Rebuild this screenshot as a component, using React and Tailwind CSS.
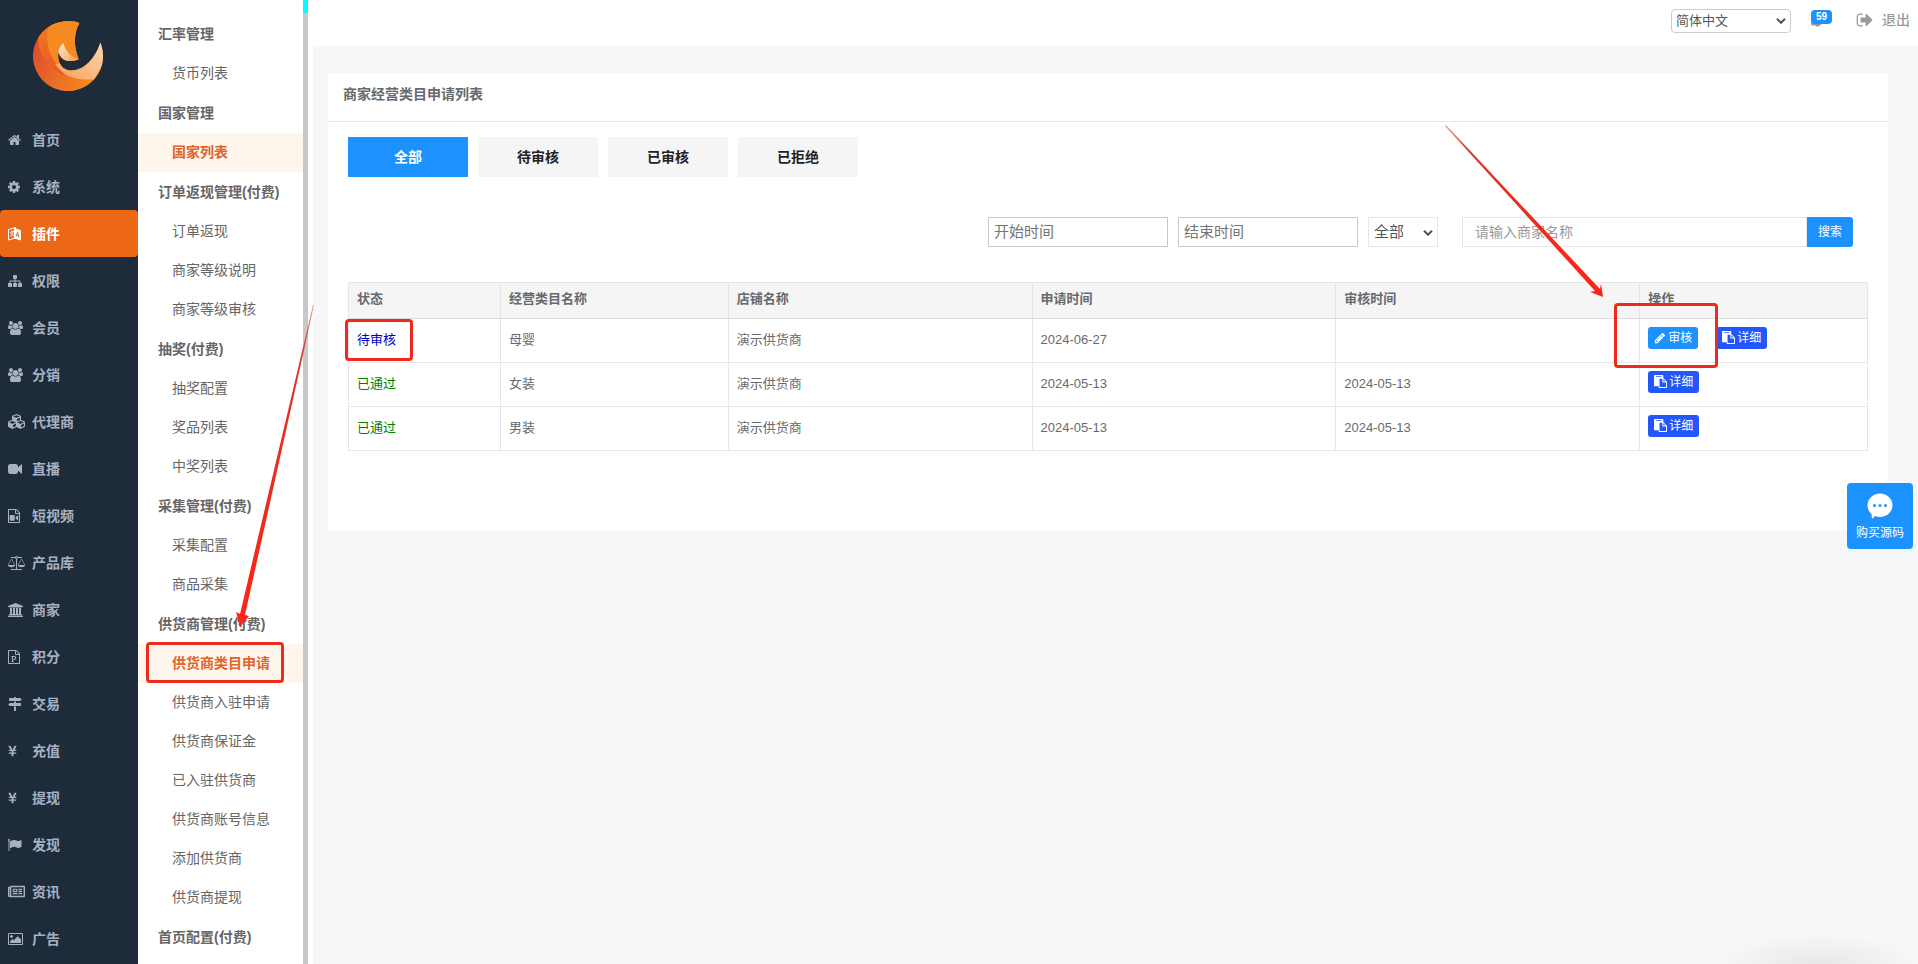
import React, { useState } from 'react';
import { FaCubes, FaYenSign, FaRegNewspaper } from 'react-icons/fa';

const ICONS = {
  home: {
    box: '64 0 1792 1792',
    d: 'M1472 992v480q0 26-19 45t-45 19h-384v-384h-256v384h-384q-26 0-45-19t-19-45v-480q0-1 .5-3t.5-3l575-474 575 474q1 2 1 6zm223-69l-62 74q-8 9-21 11h-3q-13 0-21-7l-692-577-692 577q-12 8-24 7-13-2-21-11l-62-74q-8-10-7-23.5t11-21.5l719-599q32-26 76-26t76 26l244 204v-195q0-14 9-23t23-9h192q14 0 23 9t9 23v408l219 182q10 8 11 21.5t-7 23.5z',
  },
  cog: {
    box: '128 0 1792 1792',
    d: 'M1152 896q0-106-75-181t-181-75-181 75-75 181 75 181 181 75 181-75 75-181zm512-109v222q0 12-8 23t-20 13l-185 28q-19 54-39 91 35 50 107 138 10 12 10 25t-9 23q-27 37-99 108t-94 71q-12 0-26-9l-138-108q-44 23-91 38-16 136-29 186-7 28-36 28h-222q-14 0-24.5-8.5t-11.5-21.5l-28-184q-49-16-90-37l-141 107q-10 9-25 9-14 0-25-11-126-114-165-168-7-10-7-23 0-12 8-23 15-21 51-66.5t54-70.5q-27-50-41-99l-183-27q-13-2-21-12.5t-8-23.5v-222q0-12 8-23t19-13l186-28q14-46 39-92-40-57-107-138-10-12-10-24 0-10 9-23 26-36 98.5-107.5t94.5-71.5q13 0 26 10l138 107q44-23 91-38 16-136 29-186 7-28 36-28h222q14 0 24.5 8.5t11.5 21.5l28 184q49 16 90 37l142-107q9-9 24-9 13 0 25 10 129 119 165 170 7 8 7 22 0 12-8 23-15 21-51 66.5t-54 70.5q26 50 41 98l183 28q13 2 21 12.5t8 23.5z',
  },
  sitemap: {
    box: '0 0 1792 1792',
    d: 'M1792 1248v320q0 40-28 68t-68 28h-320q-40 0-68-28t-28-68v-320q0-40 28-68t68-28h96v-192h-512v192h96q40 0 68 28t28 68v320q0 40-28 68t-68 28h-320q-40 0-68-28t-28-68v-320q0-40 28-68t68-28h96v-192h-512v192h96q40 0 68 28t28 68v320q0 40-28 68t-68 28h-320q-40 0-68-28t-28-68v-320q0-40 28-68t68-28h96v-192q0-52 38-90t90-38h512v-192h-96q-40 0-68-28t-28-68v-320q0-40 28-68t68-28h320q40 0 68 28t28 68v320q0 40-28 68t-68 28h-96v192h512q52 0 90 38t38 90v192h96q40 0 68 28t28 68z',
  },
  group: {
    box: '-64 0 1920 1792',
    d: 'M529 896q-162 5-265 128h-134q-82 0-138-40.5t-56-118.5q0-353 124-353 6 0 43.5 21t97.5 42.5 119 21.5q67 0 133-23-5 37-5 66 0 139 81 256zm1071 637q0 120-73 189.5t-194 69.5h-874q-121 0-194-69.5t-73-189.5q0-53 3.5-103.5t14-109 26.5-108.5 43-97.5 62-81 85.5-53.5 111.5-20q10 0 43 21.5t73 48 107 48 135 21.5 135-21.5 107-48 73-48 43-21.5q61 0 111.5 20t85.5 53.5 62 81 43 97.5 26.5 108.5 14 109 3.5 103.5zm-1024-1277q0 106-75 181t-181 75-181-75-75-181 75-181 181-75 181 75 75 181zm704 384q0 159-112.5 271.5t-271.5 112.5-271.5-112.5-112.5-271.5 112.5-271.5 271.5-112.5 271.5 112.5 112.5 271.5zm576 225q0 78-56 118.5t-138 40.5h-134q-103-123-265-128 81-117 81-256 0-29-5-66 66 23 133 23 59 0 119-21.5t97.5-42.5 43.5-21q124 0 124 353zm-128-609q0 106-75 181t-181 75-181-75-75-181 75-181 181-75 181 75 75 181z',
  },
  video: {
    box: '0 0 1792 1792',
    d: 'M1792 352v1088q0 42-39 59-13 5-25 5-27 0-45-19l-403-403v166q0 119-84.5 203.5t-203.5 84.5h-704q-119 0-203.5-84.5t-84.5-203.5v-704q0-119 84.5-203.5t203.5-84.5h704q119 0 203.5 84.5t84.5 203.5v165l403-402q18-19 45-19 12 0 25 5 39 17 39 59z',
  },
  fileVideo: {
    box: '128 0 1792 1792',
    d: 'M1596 380q28 28 48 76t20 88v1152q0 40-28 68t-68 28h-1344q-40 0-68-28t-28-68v-1600q0-40 28-68t68-28h896q40 0 88 20t76 48zm-444-244v376h376q-10-29-22-41l-313-313q-12-12-41-22zm384 1528v-1024h-416q-40 0-68-28t-28-68v-416h-768v1536h1280zM860 768q52 0 90 38t38 90v480q0 52-38 90t-90 38h-400q-52 0-90-38t-38-90v-480q0-52 38-90t90-38h400zm552 30q20 8 20 30v616q0 22-20 30-8 2-12 2-14 0-23-9l-285-286v-90l285-286q9-9 23-9 4 0 12 2z',
  },
  balance: {
    box: '0 0 2176 1792',
    d: 'M1728 448l-384 704h768zm-1280 0l-384 704h768zm821-192q-14 40-45.500 71.500t-71.500 45.500v1291h608q14 0 23 9t9 23v64q0 14-9 23t-23 9h-1344q-14 0-23-9t-9-23v-64q0-14 9-23t23-9h608v-1291q-40-14-71.500-45.500t-45.500-71.500h-491q-14 0-23-9t-9-23v-64q0-14 9-23t23-9h491q21-57 70-92.500t111-35.500 111 35.500 70 92.500h491q14 0 23 9t9 23v64q0 14-9 23t-23 9h-491zm-181 16q33 0 56.500-23.500t23.500-56.500-23.500-56.500-56.500-23.500-56.500 23.500-23.500 56.500 23.500 56.500 56.500 23.500zm1088 880q0 73-46.500 131t-117.500 91-144.500 49.500-139.500 16.500-139.500-16.500-144.500-49.500-117.500-91-46.500-131q0-11 35-81t92-174.500 107-195.500 102-184 56-100q18-33 56-33t56 33q4 7 56 100t102 184 107 195.500 92 174.500 35 81zm-1280 0q0 73-46.500 131t-117.500 91-144.500 49.500-139.500 16.500-139.500-16.500-144.500-49.500-117.500-91-46.500-131q0-11 35-81t92-174.500 107-195.500 102-184 56-100q18-33 56-33t56 33q4 7 56 100t102 184 107 195.500 92 174.500 35 81z',
  },
  bank: {
    box: '-128 0 1920 1792',
    d: 'M832 0l960 384v128h-128q0 26-20.5 45t-48.5 19h-1526q-28 0-48.500-19t-20.500-45h-128v-128zm-704 640h256v768h128v-768h256v768h128v-768h256v768h128v-768h256v768h59q28 0 48.500 19t20.500 45v64h-1664v-64q0-26 20.500-45t48.500-19h59v-768zm1595 960q28 0 48.500 19t20.500 45v128h-1920v-128q0-26 20.500-45t48.500-19h1782z',
  },
  filePoint: {
    box: '128 0 1792 1792',
    d: 'M1596 380q28 28 48 76t20 88v1152q0 40-28 68t-68 28h-1344q-40 0-68-28t-28-68v-1600q0-40 28-68t68-28h896q40 0 88 20t76 48zm-444-244v376h376q-10-29-22-41l-313-313q-12-12-41-22zm384 1528v-1024h-416q-40 0-68-28t-28-68v-416h-768v1536h1280zm-992-234v106h327v-106h-93v-167h137q76 0 118-15 67-23 106.500-87t39.500-146q0-81-37-141t-100-87q-48-19-130-19h-368v107h92v555h-92zm353-280h-119v-268h120q52 0 83 18 56 33 56 115 0 89-62 120-31 15-78 15z',
  },
  signs: {
    box: '0 0 1792 1792',
    d: 'M1745 297q10 10 10 23t-10 23l-141 141q-28 28-68 28h-1344q-26 0-45-19t-19-45v-256q0-26 19-45t45-19h576v-64q0-26 19-45t45-19h128q26 0 45 19t19 45v64h512q40 0 68 28zm-977 919h256v512q0 26-19 45t-45 19h-128q-26 0-45-19t-19-45v-512zm832-448q26 0 45 19t19 45v256q0 26-19 45t-45 19h-1344q-40 0-68-28l-141-141q-10-10-10-23t10-23l141-141q28-28 68-28h512v-192h256v192h576z',
  },
  flag: {
    box: '64 0 1792 1792',
    d: 'M320 256q0 72-64 110v1266q0 13-9.500 22.500t-22.500 9.500h-64q-13 0-22.500-9.500t-9.500-22.500v-1266q-64-38-64-110 0-53 37.500-90.500t90.500-37.500 90.500 37.500 37.500 90.500zm1472 64v763q0 25-12.500 38.500t-39.500 27.500q-215 116-369 116-61 0-123.500-22t-108.500-48-115.500-48-142.500-22q-192 0-464 146-17 9-33 9-26 0-45-19t-19-45v-742q0-32 31-55 21-14 79-43 236-120 421-120 107 0 200 29t219 88q38 19 88 19 54 0 117.500-21t110-47 88-47 54.500-21q26 0 45 19t19 45z',
  },
  image: {
    box: '-64 0 1920 1792',
    d: 'M576 576q0 80-56 136t-136 56-136-56-56-136 56-136 136-56 136 56 56 136zm1024 384v448h-1408v-192l320-320 160 160 512-512zm96-704h-1600q-13 0-22.500 9.500t-9.500 22.500v1216q0 13 9.500 22.500t22.500 9.500h1600q13 0 22.500-9.500t9.500-22.500v-1216q0-13-9.500-22.500t-22.500-9.500zm160 32v1216q0 66-47 113t-113 47h-1600q-66 0-113-47t-47-113v-1216q0-66 47-113t113-47h1600q66 0 113 47t47 113z',
  },
  pencil: {
    box: '0 0 1792 1792',
    d: 'M491 1536l91-91-235-235-91 91v107h128v128h107zm523-928q0-22-22-22-10 0-17 7l-542 542q-7 7-7 17 0 22 22 22 10 0 17-7l542-542q7-7 7-17zm-54-192l416 416-832 832h-416v-416zm683 96q0 53-37 90l-166 166-416-416 166-165q36-38 90-38 53 0 91 38l235 234q37 39 37 91z',
  },
  paste: {
    box: '0 0 1792 1792',
    d: 'M768 1664h896v-640h-416q-40 0-68-28t-28-68v-416h-384v1152zm256-1440v-64q0-13-9.500-22.500t-22.500-9.500h-704q-13 0-22.500 9.500t-9.500 22.500v64q0 13 9.500 22.500t22.500 9.500h704q13 0 22.500-9.500t9.500-22.500zm256 672h299l-299-299v299zm512 128v672q0 40-28 68t-68 28h-960q-40 0-68-28t-28-68v-160h-544q-40 0-68-28t-28-68v-1344q0-40 28-68t68-28h1088q40 0 68 28t28 68v328q21 13 36 28l408 408q28 28 48 76t20 88z',
  },
  signOut: {
    box: '0 0 1792 1792',
    d: 'M704 1440q0 4 1 20t.5 26.500-3 23.500-10 19.500-20.500 6.500h-320q-119 0-203.500-84.500t-84.500-203.500v-704q0-119 84.500-203.500t203.500-84.500h320q13 0 22.500 9.500t9.500 22.500q0 4 1 20t.5 26.500-3 23.500-10 19.500-20.500 6.500h-320q-66 0-113 47t-47 113v704q0 66 47 113t113 47h312l11.500 1 11.500 3 8 5.500 7 9 2 13.500zm928-544q0 26-19 45l-544 544q-19 19-45 19t-45-19-19-45v-288h-448q-26 0-45-19t-19-45v-384q0-26 19-45t45-19h448v-288q0-26 19-45t45-19 45 19l544 544q19 19 19 45z',
  },
};

const Icon = ({ name, className }) => (
  <svg viewBox={ICONS[name].box} className={className} fill="currentColor" aria-hidden="true">
    <path d={ICONS[name].d} />
  </svg>
);

// Two overlapping pages, the front one filled
const LanguageIcon = () => (
  <svg viewBox="0 0 14 14" className="h-3.5 w-3.5" fill="none" stroke="currentColor" aria-hidden="true">
    <path d="M.5 2.500 7.500.5v10.500l-7 2z" />
    <path d="M2 5.500l4-1.200M4 3.500v1.300M5.200 5c-.5 2-1.500 3.500-3.200 4.500M2.800 6c.8 1.500 1.800 2.300 3.200 2.800" strokeWidth=".8" />
    <path d="M6.500 1.500l6 2v9.500l-6-2z" fill="currentColor" />
    <path d="M8 9.500l1.500-4.500 1.500 5.500M8.500 8.300l2 .6" stroke="#ec6816" strokeWidth=".9" />
  </svg>
);

const Logo = () => (
  <svg viewBox="0 0 70 70" className="h-[70px] w-[70px]" aria-hidden="true">
    <defs>
      <linearGradient id="logoBase" x1="0" y1=".4" x2="1" y2=".9">
        <stop offset="0" stopColor="#df4d2b" />
        <stop offset=".55" stopColor="#ee7524" />
        <stop offset="1" stopColor="#f8921d" />
      </linearGradient>
      <linearGradient id="logoMid" x1="0" y1="0" x2=".6" y2="1">
        <stop offset="0" stopColor="#f47a1e" />
        <stop offset="1" stopColor="#e4562a" />
      </linearGradient>
      <linearGradient id="logoPale" x1="0" y1="1" x2="1" y2="0">
        <stop offset="0" stopColor="#f5a052" />
        <stop offset="1" stopColor="#fbdcbd" />
      </linearGradient>
      <linearGradient id="logoInner" x1="0" y1="0" x2="1" y2="1">
        <stop offset="0" stopColor="#fde9d6" />
        <stop offset="1" stopColor="#f4a05a" />
      </linearGradient>
      <clipPath id="logoClip">
        <path d="M46.300 2A35 35 0 1 0 67.300 21.600C64 33 54 49.500 38 49.500C29 49.500 24 42 25.300 31C27 36 31 40 36 40C40 40 43 39.500 45.700 38.300C40.500 25 40.500 13 46.300 2z" />
      </clipPath>
    </defs>
    <g clipPath="url(#logoClip)">
      <rect width="70" height="70" fill="url(#logoBase)" />
      <path d="M5 16C5 35 18 48 30 54L45 38L50 0H10z" fill="url(#logoMid)" />
      <path d="M15 7C12 24 17 36 26 46L46 40L50 0H20z" fill="#f58a20" />
      <path d="M22 43C32 58 46 59 61 58.500L72 40V15L45 40z" fill="url(#logoPale)" />
    </g>
    <path d="M30.300 22C28 24.500 25.500 28 25.300 31C27 36 31 40 36 40C40 40 43 39.500 45.700 38.300C38 36 33 31 30.300 22z" fill="url(#logoInner)" />
  </svg>
);

const navItems = [
  { label: '首页', icon: <Icon name="home" className="h-3.5 w-3.5" /> },
  { label: '系统', icon: <Icon name="cog" className="h-3.5 w-3.5" /> },
  { label: '插件', icon: <LanguageIcon /> },
  { label: '权限', icon: <Icon name="sitemap" className="h-3.5 w-3.5" /> },
  { label: '会员', icon: <Icon name="group" className="h-3.5 w-[15px]" /> },
  { label: '分销', icon: <Icon name="group" className="h-3.5 w-[15px]" /> },
  { label: '代理商', icon: <FaCubes className="h-[17px] w-[17px]" /> },
  { label: '直播', icon: <Icon name="video" className="h-3.5 w-3.5" /> },
  { label: '短视频', icon: <Icon name="fileVideo" className="h-3.5 w-3.5" /> },
  { label: '产品库', icon: <Icon name="balance" className="h-3.5 w-[17px]" /> },
  { label: '商家', icon: <Icon name="bank" className="h-3.5 w-[15px]" /> },
  { label: '积分', icon: <Icon name="filePoint" className="h-3.5 w-3.5" /> },
  { label: '交易', icon: <Icon name="signs" className="h-3.5 w-3.5" /> },
  { label: '充值', icon: <FaYenSign className="h-3 w-[9px]" /> },
  { label: '提现', icon: <FaYenSign className="h-3 w-[9px]" /> },
  { label: '发现', icon: <Icon name="flag" className="h-3.5 w-3.5" /> },
  { label: '资讯', icon: <FaRegNewspaper className="h-[17px] w-[17px]" /> },
  { label: '广告', icon: <Icon name="image" className="h-3.5 w-[15px]" /> },
];

const menuGroups = [
  { title: '汇率管理', items: ['货币列表'] },
  { title: '国家管理', items: ['国家列表'] },
  { title: '订单返现管理(付费)', items: ['订单返现', '商家等级说明', '商家等级审核'] },
  { title: '抽奖(付费)', items: ['抽奖配置', '奖品列表', '中奖列表'] },
  { title: '采集管理(付费)', items: ['采集配置', '商品采集'] },
  {
    title: '供货商管理(付费)',
    items: ['供货商类目申请', '供货商入驻申请', '供货商保证金', '已入驻供货商', '供货商账号信息', '添加供货商', '供货商提现'],
  },
  { title: '首页配置(付费)', items: [] },
];

const activeMenus = ['国家列表', '供货商类目申请'];

const tabs = ['全部', '待审核', '已审核', '已拒绝'];

const columns = [
  { label: '状态', width: 'w-[10%]' },
  { label: '经营类目名称', width: 'w-[15%]' },
  { label: '店铺名称', width: 'w-[20%]' },
  { label: '申请时间', width: 'w-[20%]' },
  { label: '审核时间', width: 'w-[20%]' },
  { label: '操作', width: 'w-[15%]' },
];

const rows = [
  { id: 1, status: '待审核', category: '母婴', shop: '演示供货商', applied: '2024-06-27', audited: '' },
  { id: 2, status: '已通过', category: '女装', shop: '演示供货商', applied: '2024-05-13', audited: '2024-05-13' },
  { id: 3, status: '已通过', category: '男装', shop: '演示供货商', applied: '2024-05-13', audited: '2024-05-13' },
];

const Marker = ({ className }) => (
  <span className={`pointer-events-none absolute z-10 rounded border-[3px] border-[#ee2a1d] ${className}`} />
);

const Chevron = ({ className }) => (
  <svg viewBox="0 0 10 6" className={`pointer-events-none absolute h-1.5 w-2.5 ${className}`} fill="none" stroke="#555" strokeWidth="2" aria-hidden="true">
    <path d="M1 .8 5 4.800 9 .8" />
  </svg>
);

const Sidebar = () => (
  <aside className="w-[138px] shrink-0 bg-[#1e2b3a]">
    <div className="flex h-[116px] items-start pl-[33px] pt-[21px]">
      <Logo />
    </div>
    <nav>
      {navItems.map((item) => (
        <a
          key={item.label}
          href="#"
          className={`flex h-[47px] items-center pl-2 text-sm font-bold ${
            item.label === '插件' ? 'rounded-sm bg-[#ec6816] text-white' : 'text-[#a7b1c2]'
          }`}
        >
          <span className="flex w-6 shrink-0 items-center">{item.icon}</span>
          {item.label}
        </a>
      ))}
    </nav>
  </aside>
);

const SubMenu = () => (
  <div className="flex w-[170px] shrink-0 bg-white">
    <nav className="min-w-0 flex-1 pt-3.5">
      {menuGroups.map((group) => (
        <div key={group.title}>
          <h2 className="flex h-10 items-center pl-5 text-sm font-bold text-[#666]">{group.title}</h2>
          {group.items.map((item) => (
            <a
              key={item}
              href="#"
              className={`relative flex h-[39px] items-center pb-0.5 pl-[34px] text-sm ${
                activeMenus.includes(item) ? 'bg-[#fef5ec] font-bold text-[#e0652a]' : 'text-[#666]'
              }`}
            >
              {item}
              {item === '供货商类目申请' && <Marker className="-top-0.5 bottom-0 left-2 w-[138px]" />}
            </a>
          ))}
        </div>
      ))}
    </nav>
    <div className="w-[5px] bg-[#c8c8c8]">
      <div className="h-[13px] bg-[#00ffff]" />
    </div>
  </div>
);

const TopBar = () => (
  <header className="flex h-[46px] items-start justify-end bg-white pr-2 pt-2">
    <div className="relative mr-5">
      <select
        aria-label="语言"
        className="h-6 w-[120px] appearance-none rounded border border-[#ccc] bg-white pl-1 text-[13px] leading-5 text-[#555]"
      >
        <option>简体中文</option>
      </select>
      <Chevron className="right-[5px] top-2.5" />
    </div>
    <a href="#" aria-label="消息" className="relative mr-6 mt-0.5 block h-4 w-[21px]">
      <svg viewBox="0 0 21 17" className="h-[17px] w-[21px] text-[#999]" fill="currentColor" aria-hidden="true">
        <path d="M0 12v2a1.500 1.500 0 0 0 1.500 1.500H4.500L6.500 17 11 14z" />
      </svg>
      <span className="absolute left-0 top-0 flex h-3.5 w-[21px] items-center justify-center rounded-sm bg-[#1c92fe] text-[10px] font-bold leading-none text-white">
        59
      </span>
    </a>
    <a href="#" className="flex h-6 items-center text-sm text-[#999c9e]">
      <Icon name="signOut" className="mr-2 h-[18px] w-[18px]" />
      <span className="leading-5 font-medium">退出</span>
    </a>
  </header>
);

const DetailButton = () => (
  <button type="button" className="flex h-[22px] items-center gap-0.5 rounded-[3px] bg-[#2357fc] px-1.5 text-xs text-white">
    <Icon name="paste" className="h-[13px] w-[13px]" />
    详细
  </button>
);

const App = () => {
  const [activeTab, setActiveTab] = useState('全部');
  const [keyword, setKeyword] = useState('');

  return (
    <div className="relative flex h-screen overflow-hidden bg-[#f5f7f9] font-['Liberation_Sans','Noto_Sans_CJK_SC',sans-serif] text-[#666]">
      <Sidebar />
      <SubMenu />

      <div className="flex min-w-0 flex-1 flex-col bg-white">
        <TopBar />

        <main className="ml-[5px] flex-1 bg-[#f5f7f9] pl-[15px] pr-[30px] pt-[27px]">
          <section className="bg-white pb-20">
            {/* Title */}
            <div className="flex h-[49px] items-center border-b border-[#e7eaec] pb-1.5 pl-[15px]">
              <h1 className="text-sm font-bold text-[#676a6c]">商家经营类目申请列表</h1>
            </div>

            <div className="px-5 pt-[15px]">
              {/* Tabs */}
              <div className="flex gap-2.5">
                {tabs.map((tab) => (
                  <button
                    key={tab}
                    type="button"
                    onClick={() => setActiveTab(tab)}
                    className={`h-10 w-[120px] text-sm font-bold ${
                      activeTab === tab ? 'bg-[#1c92fe] text-white' : 'bg-[#f5f5f5] text-[#222]'
                    }`}
                  >
                    {tab}
                  </button>
                ))}
              </div>

              {/* Search */}
              <form className="mt-10 flex justify-end pr-[15px]" onSubmit={(e) => e.preventDefault()}>
                <input
                  type="text"
                  aria-label="开始时间"
                  placeholder="开始时间"
                  className="mr-2.5 h-[30px] w-[180px] border border-[#c8c8c8] px-[5px] pb-0.5 text-[15px] placeholder:text-[#757575]"
                />
                <input
                  type="text"
                  aria-label="结束时间"
                  placeholder="结束时间"
                  className="mr-2.5 h-[30px] w-[180px] border border-[#c8c8c8] px-[5px] pb-0.5 text-[15px] placeholder:text-[#757575]"
                />
                <div className="relative mr-6">
                  <select
                    aria-label="状态"
                    className="h-[30px] w-[70px] appearance-none border border-[#e5e6e7] bg-white pl-[5px] text-[15px] text-[#555]"
                  >
                    <option>全部</option>
                  </select>
                  <Chevron className="right-[5px] top-[13px]" />
                </div>
                <input
                  type="text"
                  aria-label="商家名称"
                  placeholder="请输入商家名称"
                  value={keyword}
                  onChange={(e) => setKeyword(e.target.value)}
                  className="h-[30px] w-[345px] border border-[#e5e6e7] px-3 text-sm placeholder:text-[#999]"
                />
                <button type="submit" className="h-[30px] w-[46px] rounded-r-[3px] bg-[#1c92fe] text-xs text-white">
                  搜索
                </button>
              </form>

              {/* Table */}
              <table className="mt-[35px] w-full table-fixed border-collapse text-[13px] text-[#676a6c]">
                <thead className="bg-[#f5f5f5]">
                  <tr className="h-9">
                    {columns.map((col) => (
                      <th
                        key={col.label}
                        className={`${col.width} border border-[#e5e5e5] border-b-[#ddd] px-2 pb-1 text-left font-bold leading-5`}
                      >
                        {col.label}
                      </th>
                    ))}
                  </tr>
                </thead>
                <tbody>
                  {rows.map((row) => (
                    <tr key={row.id} className="h-11">
                      <td
                        className={`relative border border-[#e7e7e7] px-2 pb-0.5 leading-5 ${
                          row.status === '待审核' ? 'text-[#0000cd]' : 'text-[#008000]'
                        }`}
                      >
                        {row.status}
                        {row.status === '待审核' && <Marker className="-left-1 top-0 h-[42px] w-[68px]" />}
                      </td>
                      <td className="border border-[#e7e7e7] px-2 pb-0.5 leading-5">{row.category}</td>
                      <td className="border border-[#e7e7e7] px-2 pb-0.5 leading-5">{row.shop}</td>
                      <td className="border border-[#e7e7e7] px-2 pb-0.5 leading-5">{row.applied}</td>
                      <td className="border border-[#e7e7e7] px-2 pb-0.5 leading-5">{row.audited}</td>
                      <td className="relative border border-[#e7e7e7] px-2 pb-1.5">
                        <div className="flex">
                          {row.status === '待审核' && (
                            <button
                              type="button"
                              className="mr-[18px] flex h-[22px] items-center gap-0.5 rounded-[3px] bg-[#1c92fe] px-1.5 text-xs text-white"
                            >
                              <Icon name="pencil" className="h-3 w-3" />
                              审核
                            </button>
                          )}
                          <DetailButton />
                        </div>
                        {row.status === '待审核' && <Marker className="-left-[26px] -top-4 h-[65px] w-[104px]" />}
                      </td>
                    </tr>
                  ))}
                </tbody>
              </table>
            </div>
          </section>
        </main>
      </div>

      {/* Buy button */}
      <button
        type="button"
        className="absolute right-[5px] top-[483px] flex h-[66px] w-[66px] flex-col items-center rounded bg-[#1c92fe] pt-2.5 text-xs text-white"
      >
        <svg viewBox="0 0 26 26" className="h-[26px] w-[26px]" aria-hidden="true">
          <path d="M13 0.500C20 .5 25.500 5.800 25.500 12.300S20 24 13 24c-1.700 0-3.300-.3-4.700-.9L5 25.800 4.500 21C2 18.800.5 15.700.5 12.300.5 5.800 6 .5 13 .5z" fill="#fff" />
          <circle cx="7.500" cy="12.500" r="1.500" fill="#1c92fe" />
          <circle cx="13" cy="12.500" r="1.500" fill="#1c92fe" />
          <circle cx="18.500" cy="12.500" r="1.500" fill="#1c92fe" />
        </svg>
        <span className="mt-1 leading-5">购买源码</span>
      </button>

      {/* Glow at the bottom edge */}
      <div className="pointer-events-none absolute bottom-0 right-0 h-8 w-[200px] bg-[radial-gradient(ellipse_100px_30px_at_50%_100%,#e6e7e8,transparent)]" />

      {/* Guide arrows */}
      <svg className="pointer-events-none absolute inset-0 z-20 h-full w-full" aria-hidden="true">
        <defs>
          <linearGradient id="arrowFade" x1="0" y1="0" x2="0" y2="1">
            <stop offset="0" stopColor="#d9473a" stopOpacity=".5" />
            <stop offset=".15" stopColor="#dd3327" />
            <stop offset="1" stopColor="#ff2415" />
          </linearGradient>
        </defs>
        <path d="M313 305 314 305 245 615 249 616 240 627 236 612 240 614z" fill="url(#arrowFade)" />
        <path d="M1445 126 1446 125 1600 289 1601 284 1603 297 1590 292 1595 291z" fill="url(#arrowFade)" />
      </svg>
    </div>
  );
};

export default App;
